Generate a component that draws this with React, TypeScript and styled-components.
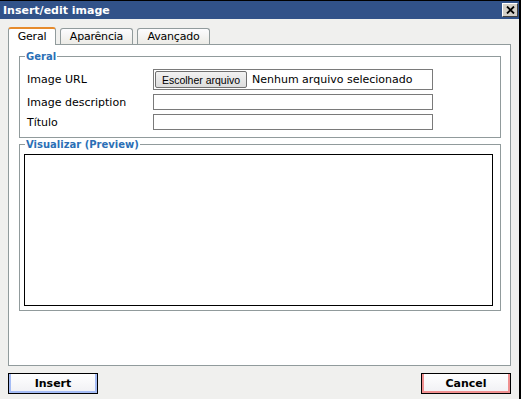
import React from 'react';
import styled, { createGlobalStyle } from 'styled-components';

const GlobalStyle = createGlobalStyle`
  html, body {
    margin: 0;
    padding: 0;
    background: #f0f0ee;
  }
  body {
    font-family: "DejaVu Sans", Verdana, sans-serif;
    font-size: 11px;
    color: #000;
  }
`;

const Window = styled.div`
  width: 521px;
  height: 399px;
  box-sizing: border-box;
  border-right: 2px solid #000;
  background: #f0f0ee;
  display: flex;
  flex-direction: column;
`;

const TitleBar = styled.div`
  height: 18px;
  border-top: 1px solid #000;
  background: #315289;
  display: flex;
  align-items: center;
  justify-content: space-between;
  padding: 0 1px 0 3px;
`;

const Title = styled.span`
  color: #fff;
  font-weight: bold;
  font-size: 11px;
`;

const CloseButton = styled.div`
  width: 14px;
  height: 12px;
  background: #d4d0c8;
  border: 1px solid;
  border-color: #fff #404040 #404040 #fff;
  display: flex;
  align-items: center;
  justify-content: center;
`;

const Content = styled.div`
  flex: 1;
  display: flex;
  flex-direction: column;
  padding: 0 8px;
`;

const Tabs = styled.div`
  margin-top: 8px;
  height: 17px;
  display: flex;
  align-items: flex-end;
  gap: 4px;
`;

const Tab = styled.div<{ $active?: boolean; $w: number }>`
  position: relative;
  z-index: ${(p) => (p.$active ? 1 : 0)};
  box-sizing: border-box;
  width: ${(p) => p.$w}px;
  height: ${(p) => (p.$active ? '18px' : '16px')};
  margin-bottom: ${(p) => (p.$active ? '-1px' : '0')};
  padding-bottom: ${(p) => (p.$active ? '2px' : '0')};
  display: flex;
  align-items: center;
  justify-content: center;
  border: 1px solid #919b9c;
  border-bottom: none;
  border-top: ${(p) => (p.$active ? '2px solid #e68b2c' : '1px solid #919b9c')};
  border-radius: 3px 3px 0 0;
  background: ${(p) => (p.$active ? '#fff' : 'linear-gradient(#fcfcfe, #ecebe6)')};
  font-size: 11px;
  letter-spacing: -0.2px;
  white-space: nowrap;
`;

const Panel = styled.div`
  box-sizing: border-box;
  height: 322px;
  background: #fff;
  border: 1px solid #919b9c;
  padding: 5px 9px 0 10px;
`;

const Fieldset = styled.fieldset<{ $pt: number; $pb: number }>`
  margin: 0;
  padding: ${(p) => p.$pt}px 0 ${(p) => p.$pb}px 0;
  border: 1px solid #919b9c;
  min-width: 0;
`;

const Legend = styled.legend`
  margin-left: 5px;
  padding: 0 1px;
  font-weight: bold;
  font-size: 10px;
  color: #2b6fb6;
  line-height: 13px;
`;

const FormGrid = styled.div`
  display: grid;
  grid-template-columns: 126px 280px;
  row-gap: 4px;
  padding-left: 7px;
  align-items: center;
`;

const Label = styled.label`
  font-size: 11px;
`;

const InputBox = styled.div<{ $h: number }>`
  box-sizing: border-box;
  height: ${(p) => p.$h}px;
  border: 1px solid #7a7a7a;
  background: #fff;
  display: flex;
  align-items: center;
  padding-left: 1px;
  gap: 5px;
`;

const FileButton = styled.div`
  box-sizing: border-box;
  height: 17px;
  width: 92px;
  border: 1px solid #707070;
  border-radius: 2px;
  background: linear-gradient(#f2f2f2, #dddddd);
  display: flex;
  align-items: center;
  justify-content: center;
  font-family: "Liberation Sans", Arial, sans-serif;
  font-size: 10.5px;
`;

const PreviewBody = styled.div`
  padding: 0 7px 0 4px;
`;

const PreviewBox = styled.div`
  box-sizing: border-box;
  height: 152px;
  border: 1px solid #000;
  background: #fff;
`;

const Footer = styled.div`
  margin-top: 7px;
  display: flex;
  justify-content: space-between;
`;

const ActionButton = styled.div<{ $tone: string }>`
  box-sizing: border-box;
  width: 90px;
  height: 21px;
  border: 1px solid #000;
  background: linear-gradient(#ffffff, #f0f0f4);
  box-shadow: inset 2px 0 ${(p) => p.$tone}, inset -2px 0 ${(p) => p.$tone},
    inset 0 -2px ${(p) => p.$tone};
  display: flex;
  align-items: center;
  justify-content: center;
  font-weight: bold;
  font-size: 11px;
`;

export default function App() {
  return (
    <>
      <GlobalStyle />
      <Window>
        <TitleBar>
          <Title>Insert/edit image</Title>
          <CloseButton>
            <svg width="9" height="8" viewBox="0 0 9 8">
              <path d="M1 0.5 L8 7.5 M8 0.5 L1 7.5" stroke="#000" strokeWidth="1.8" />
            </svg>
          </CloseButton>
        </TitleBar>
        <Content>
          <Tabs>
            <Tab $active $w={48}>Geral</Tab>
            <Tab $w={73}>Aparência</Tab>
            <Tab $w={73}>Avançado</Tab>
          </Tabs>
          <Panel>
            <Fieldset $pt={6} $pb={7}>
              <Legend>Geral</Legend>
              <FormGrid>
                <Label>Image URL</Label>
                <InputBox $h={21}>
                  <FileButton>Escolher arquivo</FileButton>
                  <span>Nenhum arquivo selecionado</span>
                </InputBox>
                <Label>Image description</Label>
                <InputBox $h={16} />
                <Label>Título</Label>
                <InputBox $h={16} />
              </FormGrid>
            </Fieldset>
            <Fieldset $pt={3} $pb={4}>
              <Legend>Visualizar (Preview)</Legend>
              <PreviewBody>
                <PreviewBox />
              </PreviewBody>
            </Fieldset>
          </Panel>
          <Footer>
            <ActionButton $tone="#a5bcf5">Insert</ActionButton>
            <ActionButton $tone="#f09090">Cancel</ActionButton>
          </Footer>
        </Content>
      </Window>
    </>
  );
}
